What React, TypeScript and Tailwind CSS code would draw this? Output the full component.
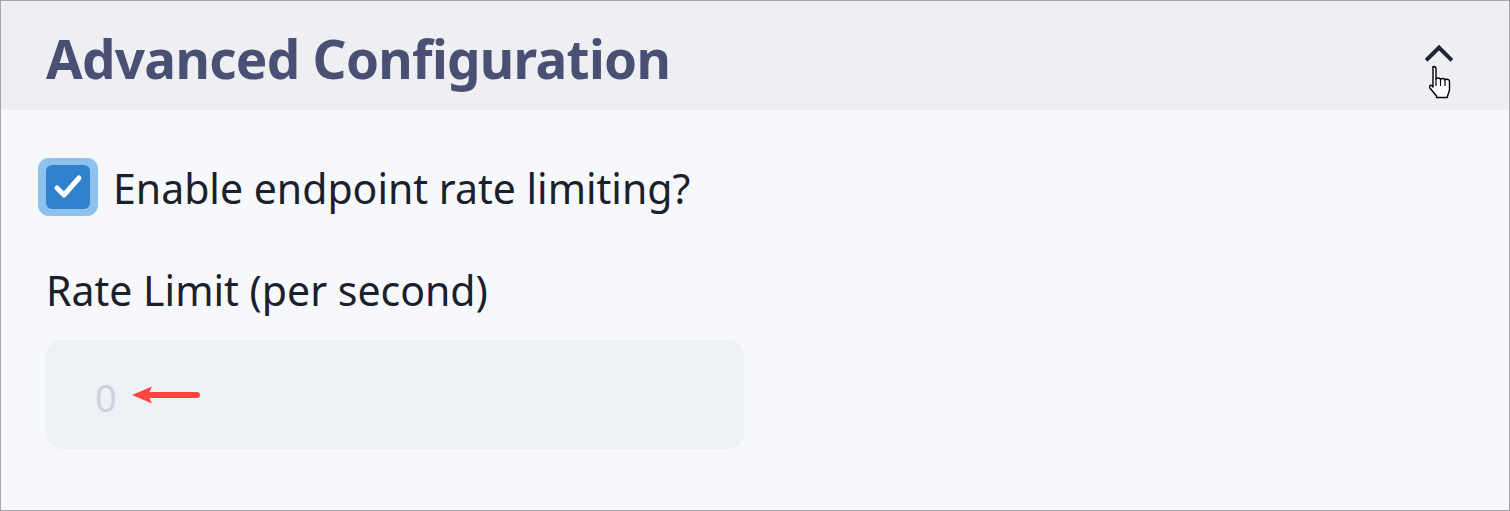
import React from "react";

export default function App() {
  return (
    <div className="w-[1510px] h-[511px] border border-[#a6a6a6] bg-[#f7f8fc] flex flex-col overflow-hidden" style={{ fontFamily: '"Noto Sans", "Open Sans", sans-serif' }}>
      <div className="h-[109px] shrink-0 bg-[#eeeff2] flex items-center justify-between pl-[45px] pr-[56px]">
        <h2 className="text-[53px] font-bold text-[#4a5073] leading-none tracking-[-0.7px] pt-[6px]">Advanced Configuration</h2>
        <div className="relative w-[28px] h-[20px] -mt-[6px]">
          <svg width="28" height="20" viewBox="0 0 28 20" fill="none">
            <path d="M2.5 16 L14 4.5 L25.5 16" stroke="#1f2535" strokeWidth="4" strokeLinecap="square" />
          </svg>
          <svg className="absolute left-[3px] top-[22px]" width="24" height="34" viewBox="0 0 24 34">
            <path d="M5.5 1.5 C7 1.5 8 2.5 8 4 V14 C8.5 12.5 12 12.5 12.5 14.5 C13 13 16.5 13 17 15 C17.5 13.8 21 14 21.5 16 V24 C21.5 27 20 29 19.5 31 V32.5 H8.5 V31 C6 28 3.5 25 2 23 C1 21.5 2 19.5 3.8 20.5 L5 22 V4 C5 2.5 4.5 1.5 5.5 1.5 Z" fill="#fff" stroke="#000" strokeWidth="1.4" strokeLinejoin="round" />
            <path d="M12.5 14.5 V21 M17 15 V21 M8 14 V21" stroke="#000" strokeWidth="1.2" />
          </svg>
        </div>
      </div>
      <div className="flex flex-col pl-[45px] pt-[48px]">
        <label className="flex items-center gap-[15px] -ml-[8px]">
          <span className="w-[60px] h-[58px] rounded-[11px] bg-[#8ec2ee] flex items-center justify-center">
            <span className="w-[44px] h-[44px] rounded-[6px] bg-[#3182ce] flex items-center justify-center">
              <svg width="32" height="28" viewBox="0 0 32 28" fill="none">
                <path d="M5 15 L12 22 L27 5" stroke="#fff" strokeWidth="5" strokeLinecap="round" strokeLinejoin="round" />
              </svg>
            </span>
          </span>
          <span className="text-[41px] text-[#1a202c] leading-none pt-[2px]">Enable endpoint rate limiting?</span>
        </label>
        <div className="mt-[54px] text-[41px] text-[#1a202c] leading-none">Rate Limit (per second)</div>
        <div className="mt-[29px] w-[698px] h-[109px] rounded-[16px] bg-[#edf1f5] flex items-center pl-[49px] pt-[4px]">
          <span className="text-[38px] text-[#cbd2dd] leading-none">0</span>
          <svg className="ml-[14px] mt-[-4px]" width="70" height="22" viewBox="0 0 70 22">
            <path d="M1 11 L21 2.5 L17 11 L21 19.5 Z" fill="#ff4444" />
            <path d="M17 11 H66" stroke="#ff4444" strokeWidth="6" strokeLinecap="round" />
          </svg>
        </div>
      </div>
    </div>
  );
}
